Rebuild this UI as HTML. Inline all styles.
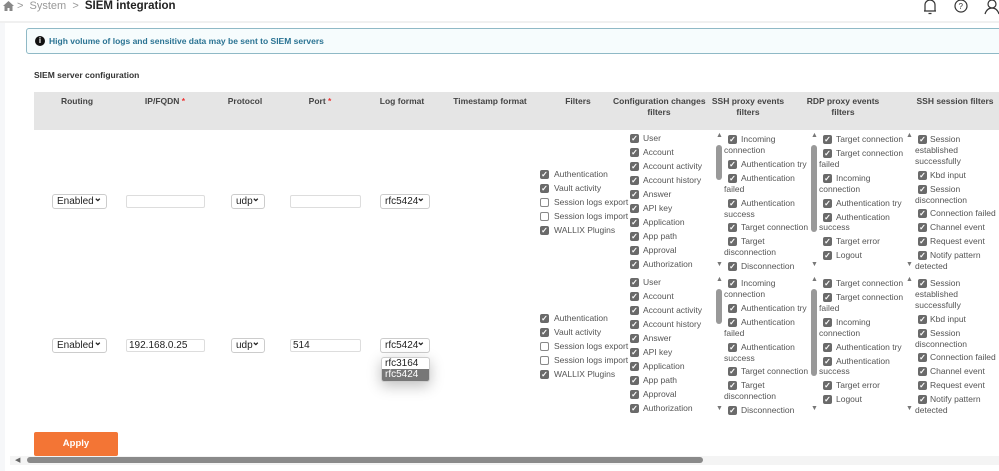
<!DOCTYPE html>
<html><head><meta charset="utf-8"><style>
*{margin:0;padding:0;box-sizing:border-box}
body{width:999px;height:471px;overflow:hidden;background:#fff;font-family:"Liberation Sans",sans-serif;position:relative;color:#444}
.a{position:absolute;white-space:nowrap}
.t{position:absolute;white-space:nowrap;font-size:8.5px;color:#555;line-height:11px}
.cb{position:absolute;width:9px;height:9px;background:#6a6a6a;border-radius:2px;color:#fff;font-size:8px;line-height:9px;text-align:center}
.cb::after{content:"✓";font-weight:bold}
.ub{position:absolute;width:9px;height:9px;border:1px solid #888;border-radius:2px;background:#fff}
.h{position:absolute;font-size:8.5px;font-weight:bold;color:#444;text-align:center;line-height:11px;white-space:nowrap}
.sel{position:absolute;height:15px;border:1px solid #ccc;border-radius:3px;background:#fff;font-size:10px;color:#222;line-height:13px;padding-left:4px}
.sel::after{content:"⌄";position:absolute;right:4px;top:-3px;font-weight:bold;font-size:10px}
.inp{position:absolute;height:13px;border:1px solid #ddd;border-radius:2px;background:#fff;font-size:10px;color:#222;line-height:11px;padding-left:2px}
.sb{position:absolute;width:6px;background:#999;border-radius:3px}
.ar{position:absolute;font-size:7px;color:#777}
.req{color:#e33}
</style></head><body>
<svg class="a" style="left:3px;top:1px" width="11" height="10" viewBox="0 0 11 10"><path d="M5.5 0 L11 5 H9.5 V10 H6.5 V7 H4.5 V10 H1.5 V5 H0 Z" fill="#888"/></svg>
<div class="a" style="left:17px;top:0;font-size:11px;color:#999;line-height:13px">&gt; &nbsp;System &nbsp;&gt; &nbsp;<b style="color:#222;font-size:11.5px">SIEM integration</b></div>
<svg class="a" style="left:922px;top:0" width="78" height="16" viewBox="0 0 78 16" fill="none" stroke="#333" stroke-width="1.2">
<path d="M3 11 V5 a5 5 0 0 1 10 0 V11 H14 M2 11 H14 M6.5 13.5 h3"/>
<circle cx="39" cy="6" r="6"/><text x="36.5" y="9" font-size="8" fill="#333" stroke="none" font-family="Liberation Sans">?</text>
<circle cx="70" cy="4" r="4"/><path d="M63 14 q2-6 7-6 q5 0 7 6"/>
</svg>
<div class="a" style="left:0;top:21px;width:999px;height:2px;background:#f0f0f0"></div>
<div class="a" style="left:0;top:23px;width:5px;height:448px;background:#f6f7f9"></div>
<div class="a" style="left:26px;top:28px;width:980px;height:26px;border:1px solid #8fb9c6;border-radius:3px;background:#f6fcfd"></div>
<div class="a" style="left:35px;top:36px;width:10px;height:10px;border-radius:50%;background:#111;color:#fff;font-size:8px;font-weight:bold;text-align:center;line-height:10px">i</div>
<div class="a" style="left:49px;top:36px;font-size:8.5px;font-weight:bold;color:#2a7393">High volume of logs and sensitive data may be sent to SIEM servers</div>
<div class="a" style="left:34px;top:70px;font-size:8.5px;font-weight:bold;color:#333">SIEM server configuration</div>
<div class="a" style="left:34px;top:92px;width:965px;height:38px;background:#e5e5e5"></div>
<div class="h" style="left:47px;top:96px;width:60px">Routing</div>
<div class="h" style="left:125px;top:96px;width:80px">IP/FQDN <span class="req">*</span></div>
<div class="h" style="left:215px;top:96px;width:60px">Protocol</div>
<div class="h" style="left:290px;top:96px;width:60px">Port <span class="req">*</span></div>
<div class="h" style="left:367px;top:96px;width:70px">Log format</div>
<div class="h" style="left:445px;top:96px;width:90px">Timestamp format</div>
<div class="h" style="left:548px;top:96px;width:60px">Filters</div>
<div class="h" style="left:613px;top:96px;width:92px">Configuration changes<br>filters</div>
<div class="h" style="left:708px;top:96px;width:80px">SSH proxy events<br>filters</div>
<div class="h" style="left:803px;top:96px;width:80px">RDP proxy events<br>filters</div>
<div class="h" style="left:910px;top:96px;width:90px">SSH session filters</div>

<div class="sel" style="left:52px;top:194px;width:55px">Enabled</div>
<div class="inp" style="left:126px;top:195px;width:79px"></div>
<div class="sel" style="left:231px;top:194px;width:34px">udp</div>
<div class="inp" style="left:290px;top:195px;width:71px"></div>
<div class="sel" style="left:380px;top:194px;width:50px">rfc5424</div>
<div class="sel" style="left:52px;top:338px;width:55px">Enabled</div>
<div class="inp" style="left:126px;top:339px;width:79px">192.168.0.25</div>
<div class="sel" style="left:231px;top:338px;width:34px">udp</div>
<div class="inp" style="left:290px;top:339px;width:71px">514</div>
<div class="sel" style="left:380px;top:338px;width:50px">rfc5424</div>
<div class="a" style="left:381px;top:357px;width:49px;height:25px;border:1px solid #ccc;border-radius:3px;background:#fff;box-shadow:0 4px 14px rgba(0,0,0,.25);font-size:10px;line-height:11px;overflow:hidden">
<div style="padding-left:3px;color:#222">rfc3164</div><div style="padding-left:3px;background:#777;color:#fff;height:12px">rfc5424</div></div>

<div id="rows"></div>
<script>
function blk(off){
let h='';
const add=(cls,x,y,txt)=>{h+=`<div class="${cls}" style="left:${x}px;top:${y+off}px">${txt||''}</div>`};
[["Authentication",1],["Vault activity",1],["Session logs export",0],["Session logs import",0],["WALLIX Plugins",1]].forEach((it,i)=>{let y=170+i*14;add(it[1]?'cb':'ub',540,y);add('t',554,y-1,it[0]);});
["User","Account","Account activity","Account history","Answer","API key","Application","App path","Approval","Authorization"].forEach((s,i)=>{let y=134+i*14;add('cb',630,y);add('t',643,y-1,s);});
add('ar',716,132,'▲');add('ar',716,261,'▼');h+=`<div class="sb" style="left:716px;top:${145+off}px;height:35px"></div>`;
[[134,'Incoming',1],[145,'connection',0],[159,'Authentication try',1],[173,'Authentication',1],[184,'failed',0],[198,'Authentication',1],[209,'success',0],[222,'Target connection',1],[236,'Target',1],[247,'disconnection',0],[261,'Disconnection',1]].forEach(a=>{if(a[2]){add('cb',728,a[0]+1);add('t',741,a[0],a[1]);}else add('t',724,a[0],a[1]);});
add('ar',811,132,'▲');add('ar',811,261,'▼');h+=`<div class="sb" style="left:811px;top:${145+off}px;height:87px"></div>`;
[[134,'Target connection',1],[148,'Target connection',1],[159,'failed',0],[173,'Incoming',1],[184,'connection',0],[198,'Authentication try',1],[212,'Authentication',1],[222,'success',0],[236,'Target error',1],[250,'Logout',1]].forEach(a=>{if(a[2]){add('cb',823,a[0]+1);add('t',836,a[0],a[1]);}else add('t',819,a[0],a[1]);});
add('ar',906,132,'▲');add('ar',906,261,'▼');
[[134,'Session',1],[145,'established',0],[156,'successfully',0],[170,'Kbd input',1],[184,'Session',1],[195,'disconnection',0],[208,'Connection failed',1],[222,'Channel event',1],[236,'Request event',1],[250,'Notify pattern',1],[261,'detected',0]].forEach(a=>{if(a[2]){add('cb',918,a[0]+1);add('t',930,a[0],a[1]);}else add('t',915,a[0],a[1]);});
return h;}
document.getElementById('rows').innerHTML=`<div class="a" style="left:0;top:0;width:999px;height:272px;overflow:hidden">${blk(0)}</div><div class="a" style="left:0;top:276px;width:999px;height:140px;overflow:hidden"><div class="a" style="left:0;top:-132px;width:999px;height:300px">${blk(0)}</div></div>`;
</script>
<div class="a" style="left:34px;top:432px;width:84px;height:24px;background:#f37535;border-radius:2px;color:#fff;font-size:9.5px;font-weight:bold;text-align:center;line-height:24px">Apply</div>
<div class="a" style="left:10px;top:456px;width:989px;height:9px;background:#f4f4f4"></div>
<div class="a" style="left:15px;top:456px;font-size:7px;color:#666">◀</div>
<div class="a" style="left:27px;top:457px;width:676px;height:6px;background:#8a8a8a;border-radius:3px"></div>
</body></html>
